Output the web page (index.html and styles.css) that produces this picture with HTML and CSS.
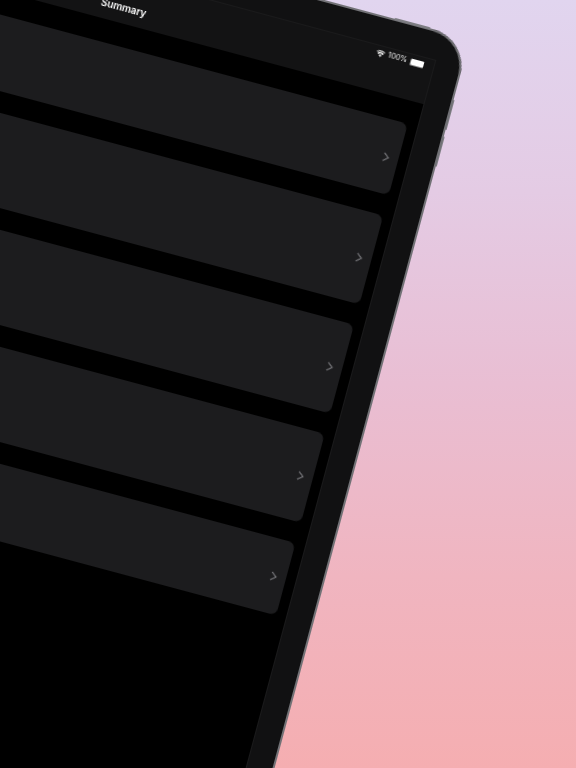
FILE: index.html
```html
<!DOCTYPE html>
<html lang="en">
<head>
<meta charset="utf-8">
<title>Summary</title>
<link rel="stylesheet" href="styles.css">
</head>
<body>
<main class="scene">
  <div class="device">
    <span class="btn btn-top"></span>
    <span class="btn btn-side-a"></span>
    <span class="btn btn-side-b"></span>
    <div class="screen">
      <header class="nav">
        <div class="status">
          <svg class="wifi" viewBox="0 0 12 9" aria-hidden="true"><path d="M6 9 L3.9 6.5 A3.2 3.2 0 0 1 8.1 6.5 Z M2.9 5.4 L1.6 3.9 A6.6 6.6 0 0 1 10.4 3.9 L9.1 5.4 A4.7 4.7 0 0 0 2.9 5.4 Z M0.7 2.9 L0 2.1 A9 9 0 0 1 12 2.1 L11.3 2.9 A7.9 7.9 0 0 0 0.7 2.9 Z"/></svg>
          <span class="pct">100%</span>
          <span class="battery"><span class="level"></span></span>
        </div>
        <h1 class="title">Summary</h1>
      </header>
      <ul class="list">
        <li class="card card-first"><svg class="chev" viewBox="0 0 7 10" aria-hidden="true"><path d="M1 1 L6 5 L1 9"/></svg></li>
        <li class="card"><svg class="chev" viewBox="0 0 7 10" aria-hidden="true"><path d="M1 1 L6 5 L1 9"/></svg></li>
        <li class="card"><svg class="chev" viewBox="0 0 7 10" aria-hidden="true"><path d="M1 1 L6 5 L1 9"/></svg></li>
        <li class="card"><svg class="chev" viewBox="0 0 7 10" aria-hidden="true"><path d="M1 1 L6 5 L1 9"/></svg></li>
        <li class="card card-last"><svg class="chev" viewBox="0 0 7 10" aria-hidden="true"><path d="M1 1 L6 5 L1 9"/></svg></li>
      </ul>
    </div>
  </div>
</main>
</body>
</html>
```

FILE: styles.css
```css
* { box-sizing: border-box; margin: 0; padding: 0; }
html, body { width: 576px; height: 768px; overflow: hidden; }
body { font-family: "Inter", "Liberation Sans", sans-serif; }

.scene {
  position: relative;
  width: 576px;
  height: 768px;
  overflow: hidden;
  background: linear-gradient(180deg, #e1d5ef 0%, #e4cbe4 25%, #e9bed3 50%, #f0b5c0 75%, #f5aeb1 100%);
}

/* The tablet sits on a free canvas, tilted 15 degrees. */
.device {
  position: absolute;
  left: -221px;
  top: -84px;
  width: 685px;
  height: 1240px;
  padding: 30px 28px 30px 28px;
  background: #111112;
  border-radius: 38px;
  box-shadow: inset 0 0 0 2px #727276;
  transform-origin: 221px 84px;
  transform: rotate(15deg);
  filter: blur(0.4px);
}

.btn {
  position: absolute;
  background: #7d7d82;
  border-radius: 1px;
}
.btn-top { top: -1px; left: 607px; width: 37px; height: 1.5px; }
.btn-side-a { top: 63px; right: -1px; width: 1.5px; height: 31px; }
.btn-side-b { top: 101px; right: -1px; width: 1.5px; height: 31px; }

.screen {
  height: 100%;
  background: #000;
  box-shadow: 0 0 0 1px #1a1a1b;
  display: flex;
  flex-direction: column;
}

.nav {
  height: 44.5px;
  flex: none;
  background: #131314;
  display: flex;
  flex-direction: column;
}

.status {
  height: 14px;
  display: flex;
  align-items: center;
  justify-content: flex-end;
  gap: 3px;
  padding-right: 10px;
  color: #e8e8e8;
}
.wifi { width: 9px; height: 7px; fill: #f2f2f2; }
.pct { font-size: 7.5px; line-height: 1; }
.battery {
  width: 14px;
  height: 7px;
  padding: 0.5px;
  display: flex;
  border-radius: 1.5px;
  background: #888;
}
.level { flex: 1; background: #fff; border-radius: 1px; }

.title {
  font-size: 10px;
  font-weight: 600;
  line-height: 13px;
  color: #fff;
  text-align: center;
  margin-top: 9px;
}

.list {
  list-style: none;
  flex: 1;
  display: flex;
  flex-direction: column;
  gap: 20.9px;
  padding: 23.5px 10px 0 0;
}

.card {
  height: 92px;
  flex: none;
  background: #1c1c1e;
  border-radius: 7px;
  display: flex;
  align-items: center;
  justify-content: flex-end;
  padding: 2px 9px 0 0;
}
.card-first { height: 74px; padding-top: 1px; }
.card-last { height: 75.5px; }

.chev {
  width: 7px;
  height: 10px;
  fill: none;
  stroke: #77777b;
  stroke-width: 1.1;
}
```
